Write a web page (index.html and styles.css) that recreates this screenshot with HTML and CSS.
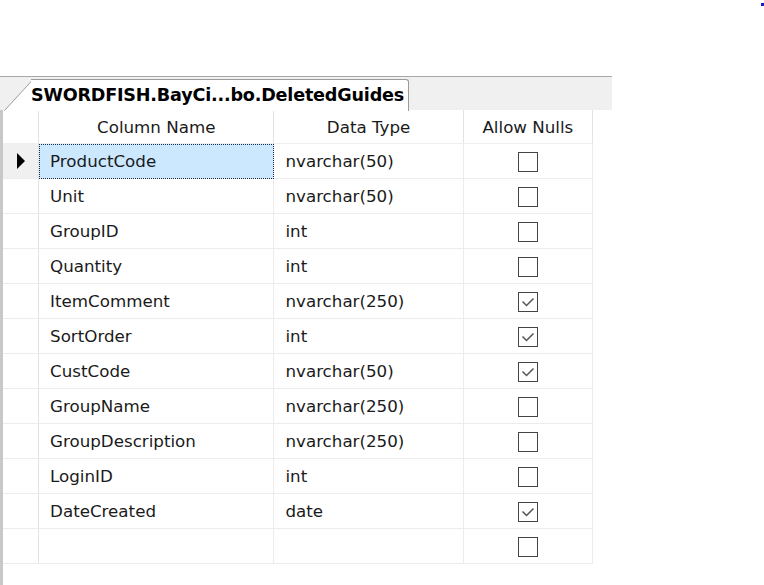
FILE: index.html
```html
<!DOCTYPE html>
<html>
<head>
<meta charset="utf-8">
<link rel="stylesheet" href="styles.css">
</head>
<body>
<div class="dot"></div>
<div class="designer">
  <div class="strip">
    <div class="tab">
      <svg class="tab-slant" width="34" height="33" viewBox="0 0 34 33"><polygon points="0,33 29,1 34,1 34,33" fill="#fff"/><polyline points="0.5,32.5 29,1.5 34,1.5" fill="none" stroke="#9a9a9a" stroke-width="1"/></svg>
      <div class="tab-body">SWORDFISH.BayCi...bo.DeletedGuides</div>
    </div>
  </div>
  <table class="grid">
    <colgroup><col class="c0"><col class="c1"><col class="c2"><col class="c3"></colgroup>
    <thead>
      <tr><th class="rh"></th><th>Column Name</th><th>Data Type</th><th>Allow Nulls</th></tr>
    </thead>
    <tbody>
      <tr class="sel"><td class="rh"><span class="arrow"></span></td><td class="name">ProductCode</td><td>nvarchar(50)</td><td class="chk"><span class="box"></span></td></tr>
      <tr><td class="rh"></td><td>Unit</td><td>nvarchar(50)</td><td class="chk"><span class="box"></span></td></tr>
      <tr><td class="rh"></td><td>GroupID</td><td>int</td><td class="chk"><span class="box"></span></td></tr>
      <tr><td class="rh"></td><td>Quantity</td><td>int</td><td class="chk"><span class="box"></span></td></tr>
      <tr><td class="rh"></td><td>ItemComment</td><td>nvarchar(250)</td><td class="chk"><span class="box on"><svg viewBox="0 0 18 18" width="18" height="18"><polyline points="3.5,8.5 7.5,12.5 14.5,5.5" fill="none" stroke="#555" stroke-width="1.5"/></svg></span></td></tr>
      <tr><td class="rh"></td><td>SortOrder</td><td>int</td><td class="chk"><span class="box on"><svg viewBox="0 0 18 18" width="18" height="18"><polyline points="3.5,8.5 7.5,12.5 14.5,5.5" fill="none" stroke="#555" stroke-width="1.5"/></svg></span></td></tr>
      <tr><td class="rh"></td><td>CustCode</td><td>nvarchar(50)</td><td class="chk"><span class="box on"><svg viewBox="0 0 18 18" width="18" height="18"><polyline points="3.5,8.5 7.5,12.5 14.5,5.5" fill="none" stroke="#555" stroke-width="1.5"/></svg></span></td></tr>
      <tr><td class="rh"></td><td>GroupName</td><td>nvarchar(250)</td><td class="chk"><span class="box"></span></td></tr>
      <tr><td class="rh"></td><td>GroupDescription</td><td>nvarchar(250)</td><td class="chk"><span class="box"></span></td></tr>
      <tr><td class="rh"></td><td>LoginID</td><td>int</td><td class="chk"><span class="box"></span></td></tr>
      <tr><td class="rh"></td><td>DateCreated</td><td>date</td><td class="chk"><span class="box on"><svg viewBox="0 0 18 18" width="18" height="18"><polyline points="3.5,8.5 7.5,12.5 14.5,5.5" fill="none" stroke="#555" stroke-width="1.5"/></svg></span></td></tr>
      <tr><td class="rh"></td><td></td><td></td><td class="chk"><span class="box"></span></td></tr>
    </tbody>
  </table>
  <div class="rest"></div>
</div>
</body>
</html>
```
FILE: styles.css
```css
html, body {
  margin: 0;
  padding: 0;
  background: #fff;
}
body {
  font-family: "DejaVu Sans", Verdana, sans-serif;
  color: #1a1a1a;
  height: 585px;
  overflow: hidden;
  position: relative;
}
.dot {
  position: absolute;
  left: 761px;
  top: 3px;
  width: 3px;
  height: 3px;
  background: #1a1acc;
}
.designer {
  padding-top: 76px;
}
.strip {
  width: 608px;
  height: 33px;
  background: #f0f0f0;
  border-top: 1px solid #a8a8a8;
  display: flex;
  align-items: flex-end;
  padding-left: 4px;
}
.tab {
  display: flex;
  align-items: flex-end;
  height: 33px;
  margin-bottom: -1px;
}
.tab-slant {
  display: block;
}
.tab-body {
  height: 31px;
  background: #fff;
  border-top: 1px solid #9a9a9a;
  border-right: 1px solid #9a9a9a;
  border-top-right-radius: 3px;
  font-weight: bold;
  font-size: 17.6px;
  line-height: 31px;
  padding: 0 4px 0 0;
  margin-left: -7px;
  letter-spacing: -0.2px;
  color: #000;
}
.grid {
  border-collapse: collapse;
  table-layout: fixed;
  width: 593px;
  border-left: 3px solid #c8c8c8;
  font-size: 16.7px;
}
.c0 { width: 37px; }
.c1 { width: 235px; }
.c2 { width: 189px; }
.c3 { width: 129px; }
.grid th {
  height: 33px;
  padding: 0;
  font-weight: normal;
  text-align: center;
  color: #1a1a1a;
  border-right: 1px solid #e3e3e3;
  border-bottom: 1px solid #efefef;
  background: #fff;
}
.grid td {
  height: 34px;
  padding: 0 0 0 11px;
  border-right: 1px solid #ececec;
  border-bottom: 1px solid #ececec;
  white-space: nowrap;
}
.grid td.rh {
  padding: 0;
  border-right: 1px solid #e3e3e3;
}
.grid th.rh {
  border-right: 1px solid #e3e3e3;
}
.sel td.rh {
  background: #f0f0f0;
}
.arrow {
  display: block;
  width: 0;
  height: 0;
  margin-left: 14px;
  border-top: 8px solid transparent;
  border-bottom: 8px solid transparent;
  border-left: 8px solid #000;
}
.sel td.name {
  background: #cce8ff;
  outline: 1px dotted #1a2a50;
  outline-offset: -1px;
}
.grid td.chk {
  padding: 0;
  text-align: center;
}
.box {
  display: inline-block;
  width: 18px;
  height: 18px;
  border: 1px solid #444;
  vertical-align: middle;
  background: #fff;
}
.box svg {
  display: block;
}
.rest {
  height: 40px;
  border-left: 3px solid #c8c8c8;
}
```
